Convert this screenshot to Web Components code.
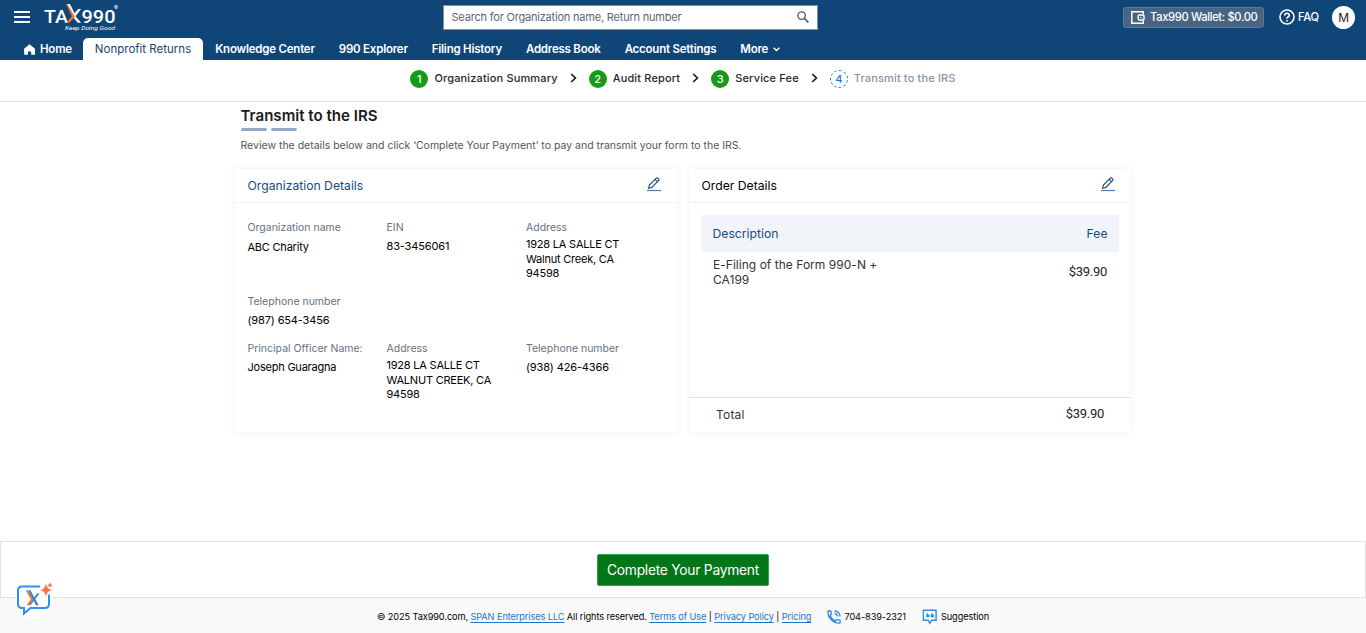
<!DOCTYPE html>
<html lang="en">
<head>
<meta charset="utf-8">
<title>Tax990 - Transmit to the IRS</title>
<style>
  body {
    margin: 0;
    height: 100vh;
    overflow: hidden;
    background: #fff;
    color: #1c1c1c;
    font-family: Inter, "Liberation Sans", sans-serif;
    font-size: 12px;
  }
</style>
</head>
<body>
<tax-page></tax-page>

<script>
const ICONS = {
  menu: '<svg width="16" height="12" viewBox="0 0 16 12"><path d="M0 1h16M0 6h16M0 11h16" stroke="#fff" stroke-width="2"/></svg>',
  home: '<svg width="11" height="11" viewBox="0 0 11 11"><path d="M5.5.2 11 4.8V10q0 .8-.8.8H7.2V7.4H3.9v3.4H.9q-.8 0-.8-.8V4.8z" fill="#fff"/></svg>',
  search: '<svg width="12" height="12" viewBox="0 0 12 12" fill="none" stroke="#4d5f73" stroke-width="1.3"><circle cx="4.6" cy="4.6" r="3.8"/><path d="m7.4 7.4 4 4" stroke-width="1.6"/></svg>',
  wallet: '<svg width="14" height="13" viewBox="0 0 14 13" fill="none" stroke="#fff" stroke-width="1.4"><path d="M12.3 3.4V.8H.8v11.4h11.5V9.6"/><rect x="7.2" y="4" width="5.8" height="5" rx="1"/><circle cx="10" cy="6.5" r=".7" fill="#fff" stroke="none"/></svg>',
  help: '<svg width="16" height="16" viewBox="0 0 16 16" fill="none" stroke="#fff" stroke-width="1.6"><circle cx="8" cy="8" r="7"/><path d="M5.7 6.5Q5.8 4.2 8 4.2t2.3 2.1Q10.3 7.3 9 8t-1 1.7M8 10.9v1.5"/></svg>',
  down: '<svg width="7" height="5" viewBox="0 0 7 5"><path d="m.6.8 2.9 2.7L6.4.8" fill="none" stroke="#fff" stroke-width="1.4"/></svg>',
  next: '<svg width="7" height="10" viewBox="0 0 7 10"><path d="m1.2 1 4.2 4-4.2 4" fill="none" stroke="#1b1b1b" stroke-width="1.7"/></svg>',
  edit: '<svg width="14" height="15" viewBox="0 0 14 15" fill="none" stroke="#174a7d"><path d="m1.6 11.2.8-3.1L9 1.3q.9-.9 1.9-.1l.7.7q.8.9-.1 1.8L4.8 10.4zM8.1 2.3l2.5 2.5" stroke-width="1.1"/><path d="M0 13.5h14" stroke="#4f7ba8" stroke-width="1.2"/></svg>',
  phone: '<svg width="14" height="14" viewBox="0 0 14 14" fill="none" stroke="#2e8ce6" stroke-width="1.3"><path d="M1.2 1h2.5l.9 3.1L3 5.5q1.5 3.7 5.3 5.6l1.5-1.7 3.3.9v2.5Q8.4 14 4.2 9.8T1.2 1zM7.5 1q5 .3 5.6 5.5M7.5 3.6q2.7.2 3.1 2.9"/></svg>',
  suggestion: '<svg width="16" height="16" viewBox="0 0 16 16"><path d="M1.4 1.2h12.7v10H9.7L7.8 14.3 6.2 11.2H1.4z" fill="none" stroke="#2e8ce6" stroke-width="1.4"/><path d="M4.2 8.3V5.7L5.9 3.4v2h1.5v2.9zM8.7 8.3V5.7l1.7-2.3v2h1.5v2.9z" fill="#2e8ce6"/></svg>',
}

function define(name, render) {
  customElements.define(name, class extends HTMLElement {
    constructor() {
      super();
      this.attachShadow({ mode: "open" });
    }

    connectedCallback() {
      this.shadowRoot.innerHTML = render(this);
    }
  });
}

define("tax-icon", el => `
  <style>
    :host { display: inline-flex; flex: none; }
    svg { display: block; }
  </style>
  ${ICONS[el.getAttribute("name")]}`)

define("tax-logo", () => `
  <style>
    :host { display: block; width: 76px; height: 30px; }
    svg { display: block; }
  </style>
  <svg width="76" height="30" viewBox="0 0 76 30" fill="#fff">
    <g font-family="Roboto, sans-serif" font-weight="500" font-size="19">
      <text x="0" y="19.8" textLength="24" lengthAdjust="spacingAndGlyphs">TA</text>
      <text x="37.5" y="19.8" textLength="34" lengthAdjust="spacingAndGlyphs">990</text>
    </g>
    <path d="M34.2 6h2.9l-5.6 7.2 5.6 6.6h-3.2l-5.8-6.6z"/>
    <path d="M22 1h3.3l6.1 12.2-6.1 6.6h-3.1l5.6-6.6z" fill="#e8743b"/>
    <path d="M23.5 1h2.4l6.2 12.2-1.1.8z"/>
    <text x="70" y="6.5" font-family="Inter" font-size="6">®</text>
    <text x="21" y="27" font-family="Roboto, sans-serif" font-style="italic" font-size="5.8" textLength="50" lengthAdjust="spacingAndGlyphs">Keep Doing Good</text>
  </svg>`)

define("nav-tab", () => `
  <style>
    :host {
      display: flex;
      align-items: center;
      gap: 5px;
      height: 22px;
      padding: 0 12px;
      box-sizing: border-box;
      color: #fff;
      font-size: 11.5px;
      font-weight: 600;
      letter-spacing: -.22px;
      line-height: 20px;
      white-space: nowrap;
    }
    :host([active]) {
      background: #fff;
      color: #17436f;
      font-weight: 400;
      letter-spacing: 0;
      border-radius: 5px 5px 0 0;
    }
    :host([home]) { padding-left: 24px; padding-right: 11px; }
  </style>
  <slot></slot>`)

define("tax-header", () => `
  <style>
    :host { display: block; height: 60px; background: #104578; color: #fff; }
    .top {
      display: grid;
      grid-template-columns: 443px 375px 1fr;
      height: 38px;
    }
    .brand { display: flex; align-items: flex-start; padding: 3px 0 0 14px; gap: 14px; }
    .brand tax-icon { padding-top: 8px; }
    .search {
      display: flex;
      align-items: center;
      justify-content: space-between;
      box-sizing: border-box;
      height: 25px;
      margin-top: 5px;
      padding: 0 8px 2px 7.5px;
      border: 1px solid #7f94aa;
      background: #fff;
      color: #5d6670;
      font-size: 11px;
      letter-spacing: -.2px;
    }
    .account {
      display: flex;
      align-items: flex-start;
      justify-content: flex-end;
      padding: 6px 11px 0 0;
      font-weight: 500;
      font-size: 11.2px;
      letter-spacing: -.35px;
    }
    .wallet {
      display: flex;
      align-items: center;
      box-sizing: border-box;
      width: 141px;
      height: 21px;
      gap: 5px;
      padding: 0 7px 1px;
      border: 1px solid #5f7797;
      border-radius: 3px;
      background: #486484;
      margin: 1px 15px 0 0;
      white-space: nowrap;
    }
    .faq { display: flex; align-items: center; gap: 3px; height: 22px; width: 42px; margin-right: 11px; }
    .user {
      width: 23px;
      height: 23px;
      border-radius: 50%;
      background: #fff;
      color: #222;
      font-weight: 400;
      font-size: 12px;
      line-height: 24px;
      text-align: center;
    }
    nav { display: flex; }
  </style>
  <div class="top">
    <div class="brand"><tax-icon name="menu"></tax-icon><tax-logo></tax-logo></div>
    <div class="search"><span>Search for Organization name, Return number</span><tax-icon name="search"></tax-icon></div>
    <div class="account">
      <div class="wallet"><tax-icon name="wallet"></tax-icon><span>Tax990 Wallet: $0.00</span></div>
      <div class="faq"><tax-icon name="help"></tax-icon><span>FAQ</span></div>
      <div class="user">M</div>
    </div>
  </div>
  <nav>
    <nav-tab home><tax-icon name="home"></tax-icon>Home</nav-tab>
    <nav-tab active>Nonprofit Returns</nav-tab>
    <nav-tab>Knowledge Center</nav-tab>
    <nav-tab>990 Explorer</nav-tab>
    <nav-tab>Filing History</nav-tab>
    <nav-tab>Address Book</nav-tab>
    <nav-tab>Account Settings</nav-tab>
    <nav-tab>More <tax-icon name="down"></tax-icon></nav-tab>
  </nav>`)

define("progress-step", el => `
  <style>
    :host { display: flex; align-items: flex-start; gap: 6px; letter-spacing: .15px; font-weight: 500; white-space: nowrap; }
    i {
      display: block;
      box-sizing: border-box;
      width: 18px;
      height: 18px;
      margin-top: 2px;
      border-radius: 50%;
      background: #159b15;
      color: #fff;
      font-style: normal;
      font-size: 11px;
      line-height: 18px;
      text-align: center;
      letter-spacing: 0;
    }
    span { line-height: 20px; color: #1c2733; font-size: 11px; }
    :host([current]) i { background: none; border: 1px dashed #1976d2; color: #1976d2; line-height: 16px; }
    :host([current]) span { color: #8594a5; }
  </style>
  <i>${el.getAttribute("number")}</i><span><slot></slot></span>`)

define("progress-steps", () => `
  <style>
    :host {
      display: flex;
      justify-content: center;
      align-items: flex-start;
      gap: 12px;
      box-sizing: border-box;
      height: 42px;
      padding-top: 8px;
      border-bottom: 1px solid #dcdddf;
    }
    tax-icon { padding-top: 5px; }
  </style>
  <progress-step number="1">Organization Summary</progress-step><tax-icon name="next"></tax-icon>
  <progress-step number="2">Audit Report</progress-step><tax-icon name="next"></tax-icon>
  <progress-step number="3">Service Fee</progress-step><tax-icon name="next"></tax-icon>
  <progress-step number="4" current>Transmit to the IRS</progress-step>`)

define("page-title", el => `
  <style>
    :host { display: block; padding-left: 5.5px; }
    h1 { margin: 0; font-size: 15.1px; font-weight: 600; line-height: 20px; }
    .bars { display: flex; gap: 4px; margin: 2px 0 6px; }
    .bars b { width: 26px; height: 3px; border-radius: 2px; background: #94a9c7; }
    p { margin: 0; color: #555; font-size: 10.5px; line-height: 17px; }
  </style>
  <h1>${el.getAttribute("heading")}</h1>
  <div class="bars"><b></b><b></b></div>
  <p><slot></slot></p>`)

define("detail-card", el => `
  <style>
    :host {
      display: flex;
      flex-direction: column;
      height: 263px;
      border-radius: 3px;
      box-shadow: 0 0 6px rgba(80, 100, 190, .1);
      background: #fff;
    }
    header {
      display: flex;
      align-items: flex-start;
      justify-content: space-between;
      box-sizing: border-box;
      height: 34px;
      padding: 8px 16px 0 12.5px;
      border-bottom: 1px solid #eef1f7;
      font-size: 12.2px;
      line-height: 18px;
      color: ${el.getAttribute("tone") || "#000"};
    }
  </style>
  <header><span>${el.getAttribute("heading")}</span><tax-icon name="edit"></tax-icon></header>
  <slot></slot>`)

define("detail-field", el => `
  <style>
    :host { display: block; font-size: 11px; }
    .label { color: #667282; font-size: 10.5px; line-height: 16px; }
    .value { padding-top: var(--value-gap, 1px); color: #000; letter-spacing: -.22px; line-height: 18px; }
    :host([address]) .value { line-height: 14.5px; }
    :host([phone]) .value { letter-spacing: -.14px; }
  </style>
  <div class="label">${el.getAttribute("label")}</div>
  <div class="value"><slot></slot></div>`)

define("organization-details", () => `
  <style>
    :host {
      display: grid;
      grid-template-columns: 139px 139.5px 130px;
      grid-template-rows: 74px 47px auto;
      padding: 17px 12px 0 12.5px;
    }
    .name { --value-gap: 2px; }
    .phone { grid-column: 1 / -1; }
  </style>
  <detail-field class="name" label="Organization name">ABC Charity</detail-field>
  <detail-field phone label="EIN">83-3456061</detail-field>
  <detail-field address label="Address">1928 LA SALLE CT<br>Walnut Creek, CA<br>94598</detail-field>
  <detail-field class="phone" phone label="Telephone number">(987) 654-3456</detail-field>
  <detail-field label="Principal Officer Name:">Joseph Guaragna</detail-field>
  <detail-field address label="Address">1928 LA SALLE CT<br>WALNUT CREEK, CA<br>94598</detail-field>
  <detail-field phone label="Telephone number">(938) 426-4366</detail-field>`)

define("order-details", () => `
  <style>
    :host { display: flex; flex-direction: column; flex: 1; color: #333; font-size: 12px; }
    .row { display: flex; justify-content: space-between; box-sizing: border-box; }
    .head {
      align-items: center;
      height: 37px;
      margin: 12px 12px 0;
      padding: 0 11.5px;
      background: #f1f5fa;
      color: #174a7d;
      font-size: 12.2px;
    }
    .item { margin: 5px 12px 0; padding: 0 12px; align-items: center; line-height: 15px; letter-spacing: .03px; }
    .item span:first-child { width: 180px; }
    .price { font-family: Roboto, sans-serif; font-size: 13px; letter-spacing: -.3px; color: #222; }
    .item .price { padding-bottom: 2px; }
    .total {
      margin-top: auto;
      height: 35px;
      padding: 8px 27px 0;
      border-top: 1px solid #dfe1e4;
      line-height: 18px;
      letter-spacing: .2px;
    }
    .total .price { line-height: 16px; letter-spacing: -.3px; }
  </style>
  <div class="row head"><span>Description</span><span>Fee</span></div>
  <div class="row item"><span>E-Filing of the Form 990-N + CA199</span><span class="price">$39.90</span></div>
  <div class="row total"><span>Total</span><span class="price">$39.90</span></div>`)

define("payment-bar", () => `
  <style>
    :host {
      display: flex;
      justify-content: center;
      align-items: flex-start;
      box-sizing: border-box;
      height: 57px;
      padding-top: 12px;
      border: 1px solid #dfe1e6;
      background: #fff;
    }
    button {
      width: 172px;
      height: 32px;
      padding: 0;
      border: 1px solid #28a745;
      border-radius: 2px;
      background: #04761a;
      color: #fff;
      font: 400 13.8px Inter, sans-serif;
      letter-spacing: -.25px;
      white-space: nowrap;
    }
  </style>
  <button>Complete Your Payment</button>`)

define("tax-footer", () => `
  <style>
    :host {
      display: flex;
      justify-content: center;
      align-items: center;
      box-sizing: border-box;
      height: 35px;
      padding-top: 2px;
      background: #f9f9f9;
      color: #000;
      font-size: 9.2px;
      letter-spacing: -.09px;
      white-space: nowrap;
    }
    a { color: #1b76c9; text-decoration: underline; text-underline-offset: 2px; }
    .contact { display: flex; align-items: center; gap: 3px; margin-left: 16px; }
  </style>
  <span>© 2025 Tax990.com, <a>SPAN Enterprises LLC</a> All rights reserved. <a>Terms of Use</a> | <a>Privacy Policy</a> | <a>Pricing</a></span>
  <span class="contact"><tax-icon name="phone"></tax-icon>704-839-2321</span>
  <span class="contact"><tax-icon name="suggestion"></tax-icon>Suggestion</span>`)

// floating chat launcher
define("chat-launcher", () => `
  <style>
    :host { position: absolute; left: 15px; top: 581px; width: 38px; height: 38px; }
    svg { display: block; }
  </style>
  <svg width="38" height="38" viewBox="0 0 38 38">
    <circle cx="19" cy="19" r="18.5" fill="#fff"/>
    <path d="M25 5.5H7Q3 5.5 3 9.5V23q0 4 4 4h2v5.5l6.5-5.5H30q4 0 4-4V13.5" fill="none" stroke="#2e90f0" stroke-width="2"/>
    <path d="M22.2 12.5h2.3l-9 11.7h-2.3z" fill="#3585d1"/>
    <path d="M10.8 9.2h2.4l5.3 9-4.4 6h-2.5l4.2-6z" fill="#f07543"/>
    <path d="M13.2 9.2h2.2l8.3 15h-2.8z" fill="#3585d1"/>
    <path d="M31 3.5q.8 4.7 5.2 5.6Q31.800 10 31 14.5q-.8-4.5-5.2-5.4 4.4-.9 5.2-5.6zM35 2.2q.3 1.7 2 2-1.7.3-2 2-.3-1.7-2-2 1.7-.3 2-2z" fill="#f07543" stroke="#f07543" stroke-width=".6"/>
  </svg>`)

define("tax-page", () => `
  <style>
    :host { display: flex; flex-direction: column; height: 633px; }
    main { flex: 1; width: 896px; margin: 0 auto; padding-top: 4px; box-sizing: border-box; }
    .cards { display: grid; grid-template-columns: 1fr 1fr; gap: 12px; margin-top: 15px; }
  </style>
  <tax-header></tax-header>
  <progress-steps></progress-steps>
  <main>
    <page-title heading="Transmit to the IRS">Review the details below and click ‘Complete Your Payment’ to pay and transmit your form to the IRS.</page-title>
    <div class="cards">
      <detail-card heading="Organization Details" tone="#174a7d"><organization-details></organization-details></detail-card>
      <detail-card heading="Order Details"><order-details></order-details></detail-card>
    </div>
  </main>
  <payment-bar></payment-bar>
  <tax-footer></tax-footer>
  <chat-launcher></chat-launcher>`)
</script>
</body>
</html>
